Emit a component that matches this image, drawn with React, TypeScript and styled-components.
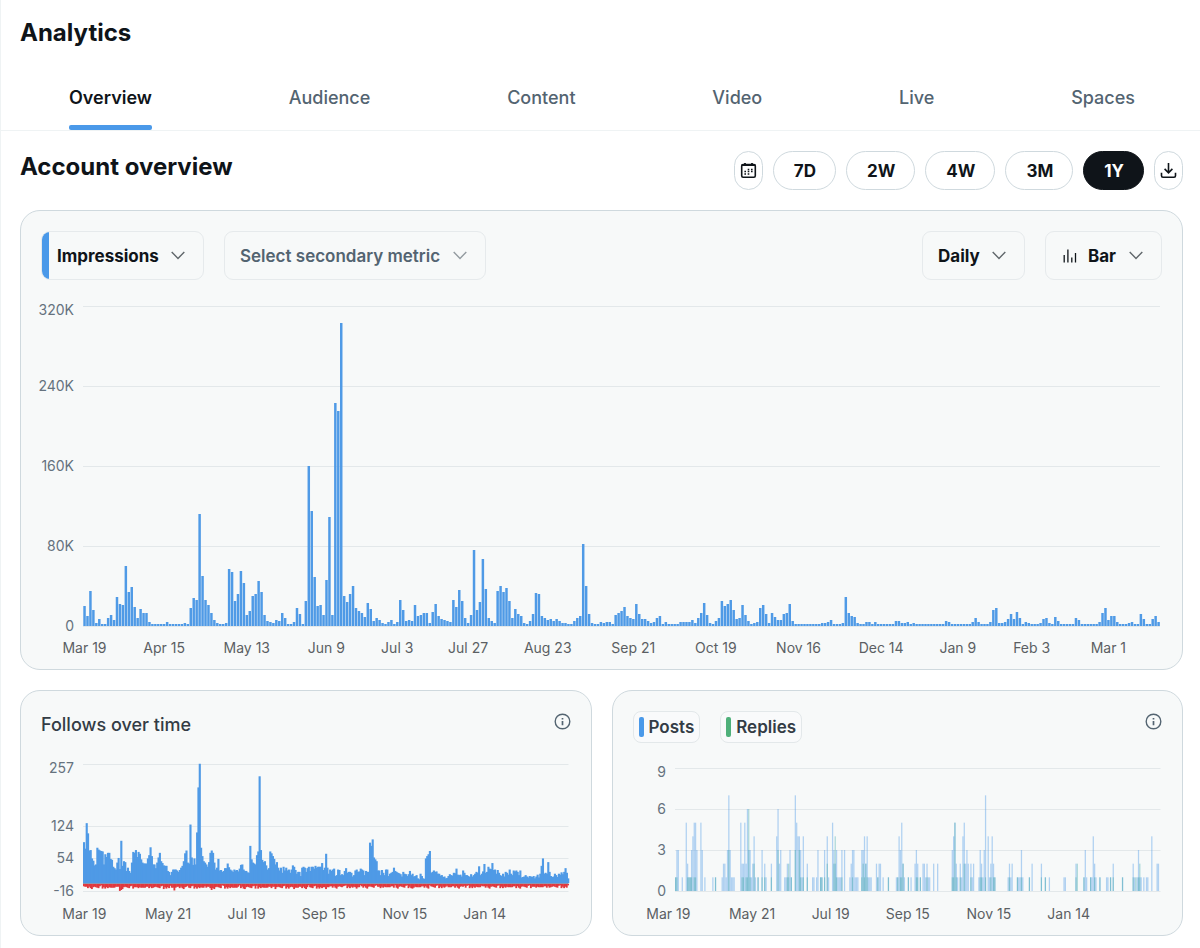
import React from "react";
import styled, { createGlobalStyle } from "styled-components";

const GlobalStyle = createGlobalStyle`
  *, *::before, *::after { box-sizing: border-box; }
  body { margin: 0; background: #fff; color: #0f1419; font-family: Inter, "Liberation Sans", sans-serif; }
  h1, h2, h3, p { margin: 0; }
  button, select { font: inherit; color: inherit; }
`;

const colors = {
  blue: "#4a99e9",
  bar: "#4f9ae6",
  red: "#e0383e",
  green: "#4fb07a",
  line: "#e3e8ea",
  border: "#cfd9de",
  axis: "#65727e",
  date: "#5b5f63",
};

/* ---------- data ---------- */

const impressions = [
  20, 10, 35, 16, 3, 7, 2, 2, 8, 11, 6, 29, 22, 21, 60, 34, 39, 19, 8, 17, 13, 13, 4, 2, 2, 2, 2, 2, 4, 2,
  2, 2, 2, 2, 3, 2, 18, 28, 26, 112, 50, 26, 21, 13, 6, 3, 2, 2, 3, 57, 54, 25, 32, 55, 43, 11, 15, 30, 32, 45,
  34, 11, 5, 4, 3, 6, 5, 13, 8, 2, 2, 4, 18, 12, 2, 25, 160, 115, 49, 20, 21, 11, 46, 109, 11, 223, 215, 303, 30, 24,
  32, 40, 18, 15, 13, 9, 23, 17, 5, 8, 6, 3, 2, 4, 6, 2, 4, 26, 16, 5, 6, 5, 21, 10, 11, 13, 13, 3, 14, 22,
  10, 7, 6, 5, 4, 26, 19, 36, 25, 8, 3, 11, 76, 16, 24, 67, 37, 8, 5, 3, 35, 40, 34, 38, 25, 8, 17, 12, 10, 3,
  2, 5, 12, 33, 32, 10, 8, 6, 7, 5, 7, 5, 3, 3, 2, 2, 5, 8, 10, 82, 40, 12, 3, 2, 2, 4, 3, 4, 4, 2,
  11, 13, 15, 19, 10, 8, 7, 22, 12, 7, 7, 5, 3, 4, 8, 10, 2, 4, 2, 2, 2, 2, 4, 4, 4, 4, 6, 3, 8, 13,
  23, 11, 3, 2, 5, 8, 25, 20, 22, 26, 16, 7, 8, 21, 11, 5, 2, 3, 4, 18, 21, 12, 3, 13, 9, 6, 6, 12, 13, 22,
  5, 2, 2, 2, 2, 2, 2, 2, 2, 2, 3, 3, 4, 6, 2, 2, 2, 3, 29, 13, 10, 9, 3, 2, 2, 4, 4, 2, 4, 2,
  2, 2, 2, 2, 2, 5, 5, 3, 3, 4, 2, 3, 2, 2, 2, 2, 2, 2, 2, 2, 2, 2, 5, 4, 2, 2, 2, 2, 2, 2,
  2, 4, 8, 4, 2, 2, 2, 4, 16, 18, 3, 3, 4, 7, 12, 7, 14, 8, 2, 4, 3, 2, 2, 2, 3, 7, 8, 3, 2, 9,
  5, 2, 2, 2, 2, 2, 8, 6, 2, 2, 2, 2, 2, 2, 4, 13, 18, 6, 10, 10, 4, 2, 2, 2, 3, 4, 2, 2, 12, 7,
  2, 2, 7, 10, 4,
];

const follows = [
  88, 74, 129, 107, 70, 71, 53, 48, 38, 40, 76, 72, 70, 69, 68, 40, 62, 56, 65, 65, 52, 50, 35, 32, 29, 44, 54, 30, 91, 37,
  47, 45, 26, 33, 26, 22, 44, 67, 65, 71, 56, 67, 63, 51, 44, 42, 42, 42, 53, 60, 77, 58, 40, 40, 32, 44, 55, 65, 47, 43,
  38, 37, 37, 26, 24, 17, 24, 29, 29, 29, 27, 24, 28, 33, 37, 47, 64, 70, 44, 42, 126, 55, 39, 53, 40, 109, 206, 257, 76, 58,
  47, 44, 40, 35, 45, 65, 70, 65, 44, 29, 33, 52, 27, 28, 24, 26, 32, 32, 42, 34, 29, 27, 24, 29, 27, 28, 25, 31, 39, 40,
  29, 26, 26, 23, 22, 80, 51, 44, 42, 40, 60, 68, 230, 71, 50, 45, 47, 38, 29, 32, 68, 64, 58, 52, 40, 45, 33, 27, 33, 22,
  35, 27, 33, 27, 29, 22, 29, 38, 35, 28, 20, 24, 24, 15, 33, 35, 33, 24, 32, 35, 26, 35, 35, 31, 37, 33, 35, 35, 35, 43,
  28, 33, 63, 33, 20, 29, 26, 29, 31, 15, 17, 29, 28, 17, 19, 17, 26, 32, 22, 24, 24, 22, 14, 17, 27, 29, 24, 25, 31, 29,
  27, 17, 26, 24, 24, 87, 80, 94, 55, 51, 47, 27, 27, 17, 28, 22, 17, 29, 29, 15, 20, 22, 24, 33, 26, 24, 22, 21, 19, 14,
  24, 20, 19, 15, 19, 26, 17, 20, 14, 15, 17, 10, 8, 20, 15, 10, 9, 53, 58, 62, 69, 22, 24, 27, 24, 25, 20, 20, 16, 17,
  13, 14, 10, 11, 15, 19, 17, 16, 22, 21, 31, 18, 17, 18, 14, 27, 22, 17, 17, 15, 13, 19, 14, 17, 20, 24, 22, 36, 17, 20,
  25, 41, 22, 24, 35, 31, 30, 43, 28, 29, 20, 28, 22, 17, 15, 20, 14, 24, 22, 18, 29, 20, 17, 27, 25, 27, 24, 17, 27, 12,
  13, 14, 17, 14, 12, 15, 14, 13, 15, 10, 14, 18, 12, 20, 37, 53, 20, 22, 20, 45, 24, 15, 13, 14, 20, 17, 13, 20, 18, 23,
  19, 24, 32, 22, 10,
];

const unfollowCycle = [8, 10, 9, 7, 8, 6, 7, 11, 8, 9, 6, 10, 7, 8, 5, 9, 7, 6, 8, 4, 6, 9, 7];
const unfollowPeaks: Record<number, number> = {
  27: 16, 28: 14, 60: 12, 68: 15, 96: 14, 120: 11, 158: 12, 182: 12, 205: 11, 247: 11, 325: 10,
};
const unfollows = follows.map((_, day) => {
  const calm = day > 180 ? 1 : 0;
  return unfollowPeaks[day] ?? Math.max(4, unfollowCycle[(day * 5) % 23] + 1 - calm - (day % 13 === 0 ? 3 : 0));
});

type DayCount = [day: number, count: number];

const posts: DayCount[] = [
  [0, 1], [1, 3], [2, 3], [5, 1], [8, 5], [9, 2], [10, 1], [11, 1], [12, 3], [13, 4], [14, 5], [15, 5], [16, 3], [19, 5],
  [20, 3], [22, 1], [28, 1], [30, 1], [35, 1], [36, 2], [37, 2], [38, 1], [39, 3], [40, 7], [41, 3], [42, 1], [43, 1],
  [44, 1], [49, 5], [50, 2], [51, 2], [52, 5], [53, 2], [54, 6], [55, 3], [56, 3], [57, 1], [58, 2], [59, 4], [60, 1],
  [62, 1], [65, 3], [67, 2], [68, 1], [72, 2], [76, 4], [77, 6], [78, 2], [79, 3], [82, 1], [83, 1], [84, 2], [85, 1],
  [86, 3], [87, 1], [90, 7], [91, 5], [92, 4], [93, 4], [94, 3], [95, 1], [96, 4], [99, 2], [103, 1], [104, 1], [106, 1],
  [107, 3], [109, 1], [110, 1], [112, 3], [114, 4], [115, 1], [118, 5], [119, 3], [120, 2], [121, 3], [122, 1], [123, 1],
  [124, 1], [125, 3], [127, 3], [131, 1], [132, 2], [133, 3], [134, 3], [135, 1], [136, 1], [137, 1], [140, 3], [141, 3],
  [142, 4], [143, 2], [144, 4], [145, 1], [146, 1], [147, 1], [151, 2], [152, 1], [153, 2], [154, 2], [156, 1], [160, 1],
  [166, 1], [167, 1], [168, 4], [169, 3], [170, 5], [171, 2], [172, 1], [175, 1], [177, 1], [180, 2], [181, 3], [182, 2],
  [184, 1], [186, 2], [187, 2], [188, 1], [189, 2], [190, 1], [191, 1], [194, 2], [197, 2], [208, 3], [209, 4], [210, 5],
  [211, 2], [212, 1], [214, 2], [215, 1], [216, 4], [217, 5], [218, 2], [219, 3], [220, 2], [222, 2], [223, 1], [224, 2],
  [228, 1], [229, 3], [230, 2], [231, 1], [232, 3], [233, 7], [235, 4], [236, 1], [237, 2], [238, 4], [239, 2], [240, 1],
  [250, 1], [251, 2], [252, 1], [253, 2], [257, 1], [258, 1], [259, 1], [260, 3], [261, 1], [266, 1], [268, 2], [275, 2],
  [278, 1], [281, 1], [292, 1], [293, 1], [301, 2], [307, 1], [308, 3], [309, 1], [312, 1], [313, 1], [314, 4], [315, 2],
  [316, 1], [319, 1], [324, 1], [325, 1], [327, 1], [329, 2], [336, 1], [344, 2], [345, 1], [347, 1], [348, 3], [349, 1],
  [350, 1], [352, 1], [354, 1], [355, 1], [358, 4], [362, 2], [363, 2],
];

const replies: DayCount[] = [
  [0, 1], [1, 1], [9, 1], [10, 1], [11, 1], [12, 1], [14, 1], [15, 1], [30, 1], [40, 3], [50, 1], [51, 1], [53, 1], [54, 1],
  [55, 6], [56, 1], [59, 2], [62, 1], [65, 1], [67, 1], [72, 1], [77, 3], [84, 1], [85, 2], [87, 1], [90, 3], [93, 3],
  [94, 1], [96, 1], [99, 1], [109, 1], [110, 1], [112, 1], [114, 2], [119, 2], [120, 4], [121, 1], [125, 1], [133, 1],
  [140, 1], [141, 2], [142, 1], [143, 2], [144, 1], [152, 1], [160, 1], [167, 1], [169, 1], [170, 1], [171, 2], [175, 1],
  [181, 1], [182, 1], [184, 1], [189, 1], [208, 1], [209, 1], [210, 5], [211, 1], [214, 1], [217, 2], [222, 1], [229, 1],
  [230, 1], [233, 1], [237, 1], [239, 1], [240, 1], [251, 1], [257, 1], [260, 1], [266, 1], [275, 1], [278, 1], [301, 1],
  [302, 2], [307, 1], [312, 1], [315, 1], [319, 1], [327, 1], [329, 1], [336, 1], [344, 1], [346, 1], [348, 1], [349, 2],
];

/* ---------- layout ---------- */

const Page = styled.main`
  min-height: 100vh;
  border-left: 1px solid #eff3f4;
`;

const TopBar = styled.header`
  padding: 17px 19px 15px;
`;

const Heading = styled.h2`
  font-size: 24px;
  line-height: 32px;
  font-weight: 700;
`;

const Tabs = styled.nav`
  display: flex;
  justify-content: space-between;
  padding: 0 65px 0 68px;
  border-bottom: 1px solid #eff3f4;
`;

const Tab = styled.a<{ $active?: boolean }>`
  display: flex;
  flex-direction: column;
  height: 66px;
  padding-top: 22px;
  font-size: 18px;
  line-height: 24px;
  font-weight: ${(p) => (p.$active ? 600 : 500)};
  color: ${(p) => (p.$active ? "#0f1419" : "#536471")};
  text-decoration: none;

  &::after {
    content: "";
    height: 5px;
    margin-top: auto;
    border-radius: 2px;
    background: ${(p) => (p.$active ? colors.blue : "transparent")};
  }
`;

const Body = styled.div`
  display: flex;
  flex-direction: column;
  gap: 20px;
  padding: 20px 17px 12px 19px;
`;

const SectionBar = styled.div`
  display: flex;
  justify-content: space-between;
  align-items: flex-start;
`;

const Ranges = styled.div`
  display: flex;
  gap: 10px;
`;

const Pill = styled.button<{ $active?: boolean; $icon?: boolean }>`
  display: flex;
  align-items: center;
  justify-content: center;
  height: 39px;
  padding: ${(p) => (p.$icon ? "0 5px" : "0 19px 0 20px")};
  border: 1px solid ${(p) => (p.$active ? "#0f1419" : colors.border)};
  border-radius: 20px;
  background: ${(p) => (p.$active ? "#0f1419" : "#fff")};
  color: ${(p) => (p.$active ? "#fff" : "#0f1419")};
  font-size: 17px;
  line-height: 20px;
  font-weight: 700;
`;

const Card = styled.section`
  display: flex;
  flex-direction: column;
  flex: 1 1 0;
  min-width: 0;
  padding: 20px;
  border: 1px solid ${colors.border};
  border-radius: 20px;
  background: #f7f9f9;
`;

const CardRow = styled.div`
  display: flex;
  gap: 20px;
`;

const Controls = styled.div`
  display: flex;
  gap: 20px;
  margin-bottom: 26px;
`;

const Spacer = styled.div`
  flex: 1;
`;

const Picker = styled.div<{ $accent?: boolean; $muted?: boolean }>`
  display: flex;
  align-items: center;
  height: 49px;
  border: 1px solid #e6eaec;
  border-radius: 9px;
  overflow: hidden;
  color: ${(p) => (p.$muted ? "#536471" : "#0f1419")};
  font-weight: ${(p) => (p.$muted ? 600 : 700)};

  &::before {
    content: "";
    display: ${(p) => (p.$accent ? "block" : "none")};
    width: 7px;
    align-self: stretch;
    background: ${colors.blue};
  }
`;

const PickerFace = styled.div<{ $tight?: boolean }>`
  display: grid;
  align-items: center;
  margin-left: ${(p) => (p.$tight ? "8px" : "15px")};

  > * { grid-area: 1 / 1; }
  > svg { justify-self: end; margin-right: 18px; pointer-events: none; }
`;

const Select = styled.select`
  appearance: none;
  height: 47px;
  padding: 0 44px 0 0;
  border: 0;
  background: transparent;
  font-size: 17px;
`;

const BarGlyph = styled.svg`
  margin-left: 17px;
  margin-right: -4px;
`;

const CardHead = styled.div`
  display: flex;
  justify-content: space-between;
  align-items: flex-start;
  height: 32px;
`;

const CardTitle = styled.h3`
  font-size: 18px;
  line-height: 28px;
  font-weight: 500;
  color: #333c45;
`;

const InfoButton = styled.button`
  display: flex;
  padding: 2px 0 0;
  border: 0;
  background: none;
  color: #536471;
`;

const Legend = styled.div`
  display: flex;
  gap: 20px;
`;

const LegendChip = styled.button<{ $color: string }>`
  display: flex;
  align-items: center;
  gap: 5px;
  height: 32px;
  padding: 0 5px;
  border: 1px solid #e3e8ea;
  border-radius: 8px;
  background: #f9fafb;
  font-size: 17px;
  font-weight: 600;
  color: #333c45;

  &::before {
    content: "";
    width: 5px;
    height: 20px;
    border-radius: 2px;
    background: ${(p) => p.$color};
  }
`;

const Plot = styled.div<{ $top?: number }>`
  padding-left: 42px;
  padding-right: 2px;
  margin-top: ${(p) => p.$top ?? 0}px;
`;

const PlotSvg = styled.svg`
  display: block;
  width: 100%;
  overflow: visible;
  font-size: 14px;
`;

/* ---------- icons ---------- */

const Chevron = ({ faint }: { faint?: boolean }) => (
  <svg width="14" height="9" viewBox="0 0 14 9" fill="none" stroke={faint ? "#939ba0" : "#60676b"} strokeWidth="1.4" aria-hidden="true">
    <path d="M0.7 0.9 7 7.5 13.3 0.9" />
  </svg>
);

const CalendarIcon = () => (
  <svg width="17" height="17" viewBox="0 0 17 17" fill="none" stroke="currentColor" strokeWidth="1.6" aria-hidden="true">
    <rect x="1.7" y="2.6" width="13.6" height="12.6" rx="1.4" />
    <path d="M1.7 3.1h13.6" strokeWidth="1.8" />
    <path d="M5 0.9v2.6M12 0.9v2.6" strokeWidth="1.8" />
    <path d="M7.7 7.4h1.6M11 7.4h1.6M4.4 9.6h1.6M7.7 9.6h1.6M11 9.6h1.6M4.4 11.9h1.6M7.7 11.9h1.6" strokeWidth="1.5" />
  </svg>
);

const DownloadIcon = () => (
  <svg width="17" height="17" viewBox="0 0 17 17" fill="none" stroke="currentColor" strokeWidth="1.6" aria-hidden="true">
    <path d="M8.5 1v9.6M4.6 6.9l3.9 3.9 3.9-3.9" />
    <path d="M1.5 10.8v2.9c0 .9.6 1.5 1.5 1.5h11c.9 0 1.5-.6 1.5-1.5v-2.9" />
  </svg>
);

const InfoIcon = () => (
  <svg width="17" height="17" viewBox="0 0 17 17" fill="none" stroke="currentColor" strokeWidth="1.4" aria-hidden="true">
    <circle cx="8.5" cy="8.5" r="7.3" />
    <path d="M8.5 4.9v1.6M8.5 8v4.2" strokeWidth="1.7" />
  </svg>
);

/* ---------- charts ---------- */

const DAYS = 365;
const pct = (day: number) => `${(day / DAYS) * 100}%`;

type Tick = { label: string; y: number };
type DateTick = [label: string, day: number];

function Axes({ ticks, dates, shift = 0.5, labelY }: { ticks: Tick[]; dates: DateTick[]; shift?: number; labelY: number }) {
  return (
    <g>
      {ticks.map((t) => (
        <g key={t.label}>
          <line x1="0" x2="100%" y1={t.y + 0.5} y2={t.y + 0.5} stroke={colors.line} />
          <text x="-9" y={t.y + (t.y === 0 ? 9 : 5)} textAnchor="end" fill={colors.axis}>{t.label}</text>
        </g>
      ))}
      {dates.map(([label, day]) => (
        <text key={label} x={pct(day + shift)} y={labelY} textAnchor="middle" fill={colors.date}>{label}</text>
      ))}
    </g>
  );
}

const mainTicks: Tick[] = [
  { label: "320K", y: 0 }, { label: "240K", y: 80 }, { label: "160K", y: 160 }, { label: "80K", y: 240 }, { label: "0", y: 320 },
];
const mainDates: DateTick[] = [
  ["Mar 19", 0], ["Apr 15", 27], ["May 13", 55], ["Jun 9", 82], ["Jul 3", 106], ["Jul 27", 130], ["Aug 23", 157],
  ["Sep 21", 186], ["Oct 19", 214], ["Nov 16", 242], ["Dec 14", 270], ["Jan 9", 296], ["Feb 3", 321], ["Mar 1", 347],
];
const smallDates: DateTick[] = [["Mar 19", 0], ["May 21", 63], ["Jul 19", 122], ["Sep 15", 180], ["Nov 15", 241], ["Jan 14", 301]];

function ImpressionsChart() {
  return (
    <Plot>
      <PlotSvg height="343" role="img" aria-label="Impressions per day">
        <Axes ticks={mainTicks} dates={mainDates} labelY={347} />
        {impressions.map((v, day) => (
          <rect key={day} x={pct(day + 0.1)} width={pct(0.84)} y={320 - v} height={v} fill={colors.bar} />
        ))}
      </PlotSvg>
    </Plot>
  );
}

const followTicks: Tick[] = [
  { label: "257", y: 0 }, { label: "124", y: 62 }, { label: "54", y: 94 }, { label: "-16", y: 127 },
];

function FollowsChart() {
  const zero = 119;
  const unit = 0.464;
  return (
    <Plot $top={21}>
      <PlotSvg height="151" role="img" aria-label="Follows and unfollows per day">
        <Axes ticks={followTicks} dates={smallDates} shift={1} labelY={155} />
        {follows.map((v, day) => (
          <rect key={day} x={pct(day)} width={pct(1.6)} y={zero - v * unit} height={v * unit} fill={colors.bar} />
        ))}
        {unfollows.map((v, day) => (
          <rect key={day} x={pct(day)} width={pct(1.4)} y={zero + 1} height={v * unit - 0.5} fill={colors.red} />
        ))}
        <line x1="0" x2="100%" y1={zero + 0.5} y2={zero + 0.5} stroke="#8b96b3" />
      </PlotSvg>
    </Plot>
  );
}

const postTicks: Tick[] = [{ label: "9", y: 0 }, { label: "6", y: 41 }, { label: "3", y: 82 }, { label: "0", y: 123 }];

function PostsChart() {
  const unit = 41 / 3;
  return (
    <Plot $top={25}>
      <PlotSvg height="147" role="img" aria-label="Posts and replies per day">
        <Axes ticks={postTicks} dates={smallDates} shift={-5} labelY={151} />
        {posts.map(([day, v]) => (
          <rect key={day} x={pct(day)} width={pct(0.95)} y={123 - v * unit} height={v * unit} fill={colors.bar} opacity="0.42" />
        ))}
        {replies.map(([day, v]) => (
          <rect key={day} x={pct(day)} width={pct(0.9)} y={123 - v * unit} height={v * unit} fill="#3fa7a6" opacity="0.42" />
        ))}
      </PlotSvg>
    </Plot>
  );
}

/* ---------- page ---------- */

type MetricPickerProps = { name: string; value: string; accent?: boolean; muted?: boolean; icon?: React.ReactNode };

function MetricPicker({ name, value, accent, muted, icon }: MetricPickerProps) {
  return (
    <Picker $accent={accent} $muted={muted}>
      {icon}
      <PickerFace $tight={accent}>
        <Select aria-label={name} defaultValue={value}>
          <option>{value}</option>
        </Select>
        <Chevron faint={muted} />
      </PickerFace>
    </Picker>
  );
}

const barGlyph = (
  <BarGlyph width="14" height="14" viewBox="0 0 14 14" stroke="#0f1419" strokeWidth="1.3" aria-hidden="true">
    <path d="M1.2 6v7.5M4.9 0.5v13M8.8 8.5v5M12.5 4v9.5" />
  </BarGlyph>
);

const tabs = ["Overview", "Audience", "Content", "Video", "Live", "Spaces"];
const ranges = ["7D", "2W", "4W", "3M", "1Y"];

export default function App() {
  return (
    <>
      <GlobalStyle />
      <Page>
        <TopBar>
          <Heading as="h1">Analytics</Heading>
        </TopBar>
        <Tabs aria-label="Analytics sections">
          {tabs.map((tab, i) => (
            <Tab key={tab} href={`#${tab.toLowerCase()}`} $active={i === 0} aria-current={i === 0 ? "page" : undefined}>
              {tab}
            </Tab>
          ))}
        </Tabs>
        <Body>
          <SectionBar>
            <Heading>Account overview</Heading>
            <Ranges>
              <Pill $icon aria-label="Choose dates"><CalendarIcon /></Pill>
              {ranges.map((range) => (
                <Pill key={range} $active={range === "1Y"} aria-pressed={range === "1Y"}>{range}</Pill>
              ))}
              <Pill $icon aria-label="Download"><DownloadIcon /></Pill>
            </Ranges>
          </SectionBar>
          <Card>
            <Controls>
              <MetricPicker name="Primary metric" value="Impressions" accent />
              <MetricPicker name="Secondary metric" value="Select secondary metric" muted />
              <Spacer />
              <MetricPicker name="Interval" value="Daily" />
              <MetricPicker name="Chart type" value="Bar" icon={barGlyph} />
            </Controls>
            <ImpressionsChart />
          </Card>
          <CardRow>
            <Card>
              <CardHead>
                <CardTitle>Follows over time</CardTitle>
                <InfoButton aria-label="About follows"><InfoIcon /></InfoButton>
              </CardHead>
              <FollowsChart />
            </Card>
            <Card>
              <CardHead>
                <Legend>
                  <LegendChip $color={colors.blue}>Posts</LegendChip>
                  <LegendChip $color={colors.green}>Replies</LegendChip>
                </Legend>
                <InfoButton aria-label="About posts and replies"><InfoIcon /></InfoButton>
              </CardHead>
              <PostsChart />
            </Card>
          </CardRow>
        </Body>
      </Page>
    </>
  );
}
